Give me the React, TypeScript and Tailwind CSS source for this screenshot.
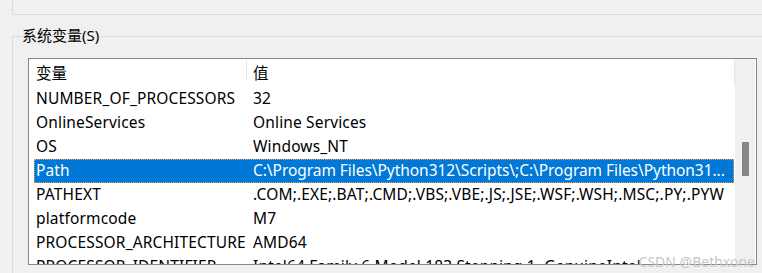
const rows: [string, string][] = [
  ['NUMBER_OF_PROCESSORS', '32'],
  ['OnlineServices', 'Online Services'],
  ['OS', 'Windows_NT'],
  ['Path', 'C:\\Program Files\\Python312\\Scripts\\;C:\\Program Files\\Python31...'],
  ['PATHEXT', '.COM;.EXE;.BAT;.CMD;.VBS;.VBE;.JS;.JSE;.WSF;.WSH;.MSC;.PY;.PYW'],
  ['platformcode', 'M7'],
  ['PROCESSOR_ARCHITECTURE', 'AMD64'],
  ['PROCESSOR_IDENTIFIER', 'Intel64 Family 6 Model 183 Stepping 1, GenuineIntel'],
];

const font = { fontFamily: '"Noto Sans", "Noto Sans CJK SC", sans-serif' };

function Row({ name, value, selected }: { name: string; value: string; selected?: boolean }) {
  return (
    <div
      className={
        selected
          ? 'ml-[5px] flex h-[24px] w-[700px] shrink-0 items-center border border-dotted border-[#f0a040] bg-[#0078d7] pb-[2px] text-white'
          : 'ml-[5px] flex h-[24px] w-[700px] shrink-0 items-center border border-transparent pb-[2px] text-black'
      }
    >
      <div className="w-[218px] shrink-0 whitespace-nowrap pl-[1px] tracking-[0.15px]">{name}</div>
      <div
        className={
          selected
            ? 'whitespace-nowrap tracking-[-0.05px]'
            : 'overflow-hidden whitespace-nowrap tracking-[0.15px]'
        }
      >
        {value}
      </div>
    </div>
  );
}

export default function App() {
  return (
    <div
      className="relative h-[273px] w-[762px] overflow-hidden bg-[#f0f0f0] text-[15.5px] leading-[20px]"
      style={font}
    >
      <div className="ml-[12px] h-[15px] border-b border-l border-[#dcdcdc]" />

      <div className="relative ml-[12px] mt-[21px] h-[300px] border-l border-t border-[#dcdcdc]">
        <div className="absolute -top-[12px] left-[8px] bg-[#f0f0f0] px-[1px] text-[15px] text-black">
          系统变量(S)
        </div>

        <div className="ml-[15px] mt-[21px] flex h-[207px] w-[729px] border border-[#828790] bg-white">
          <div className="flex w-[706px] flex-col overflow-hidden">
            <div className="flex h-[28px] shrink-0 items-start">
              <div className="flex h-[27px] w-[217px] shrink-0 items-center pl-[7px]">变量</div>
              <div className="mt-[1px] h-[21px] w-px shrink-0 bg-[#e5e5e5]" />
              <div className="flex h-[27px] flex-1 items-center pl-[6px]">值</div>
              <div className="mt-[1px] h-[25px] w-px shrink-0 bg-[#e5e5e5]" />
            </div>
            {rows.map(([n, v]) => (
              <Row key={n} name={n} value={v} selected={n === 'Path'} />
            ))}
          </div>
          <div className="w-[21px] shrink-0 border-r border-white bg-[#f0f0f0] pl-[7px] pt-[83px]">
            <div className="h-[34px] w-[7px] bg-[#868686]" />
          </div>
        </div>
      </div>

      <div className="absolute bottom-[2px] right-[7px] text-[14px] leading-[18px] text-[#c8c8c8]">
        CSDN @Bethxone
      </div>
    </div>
  );
}
